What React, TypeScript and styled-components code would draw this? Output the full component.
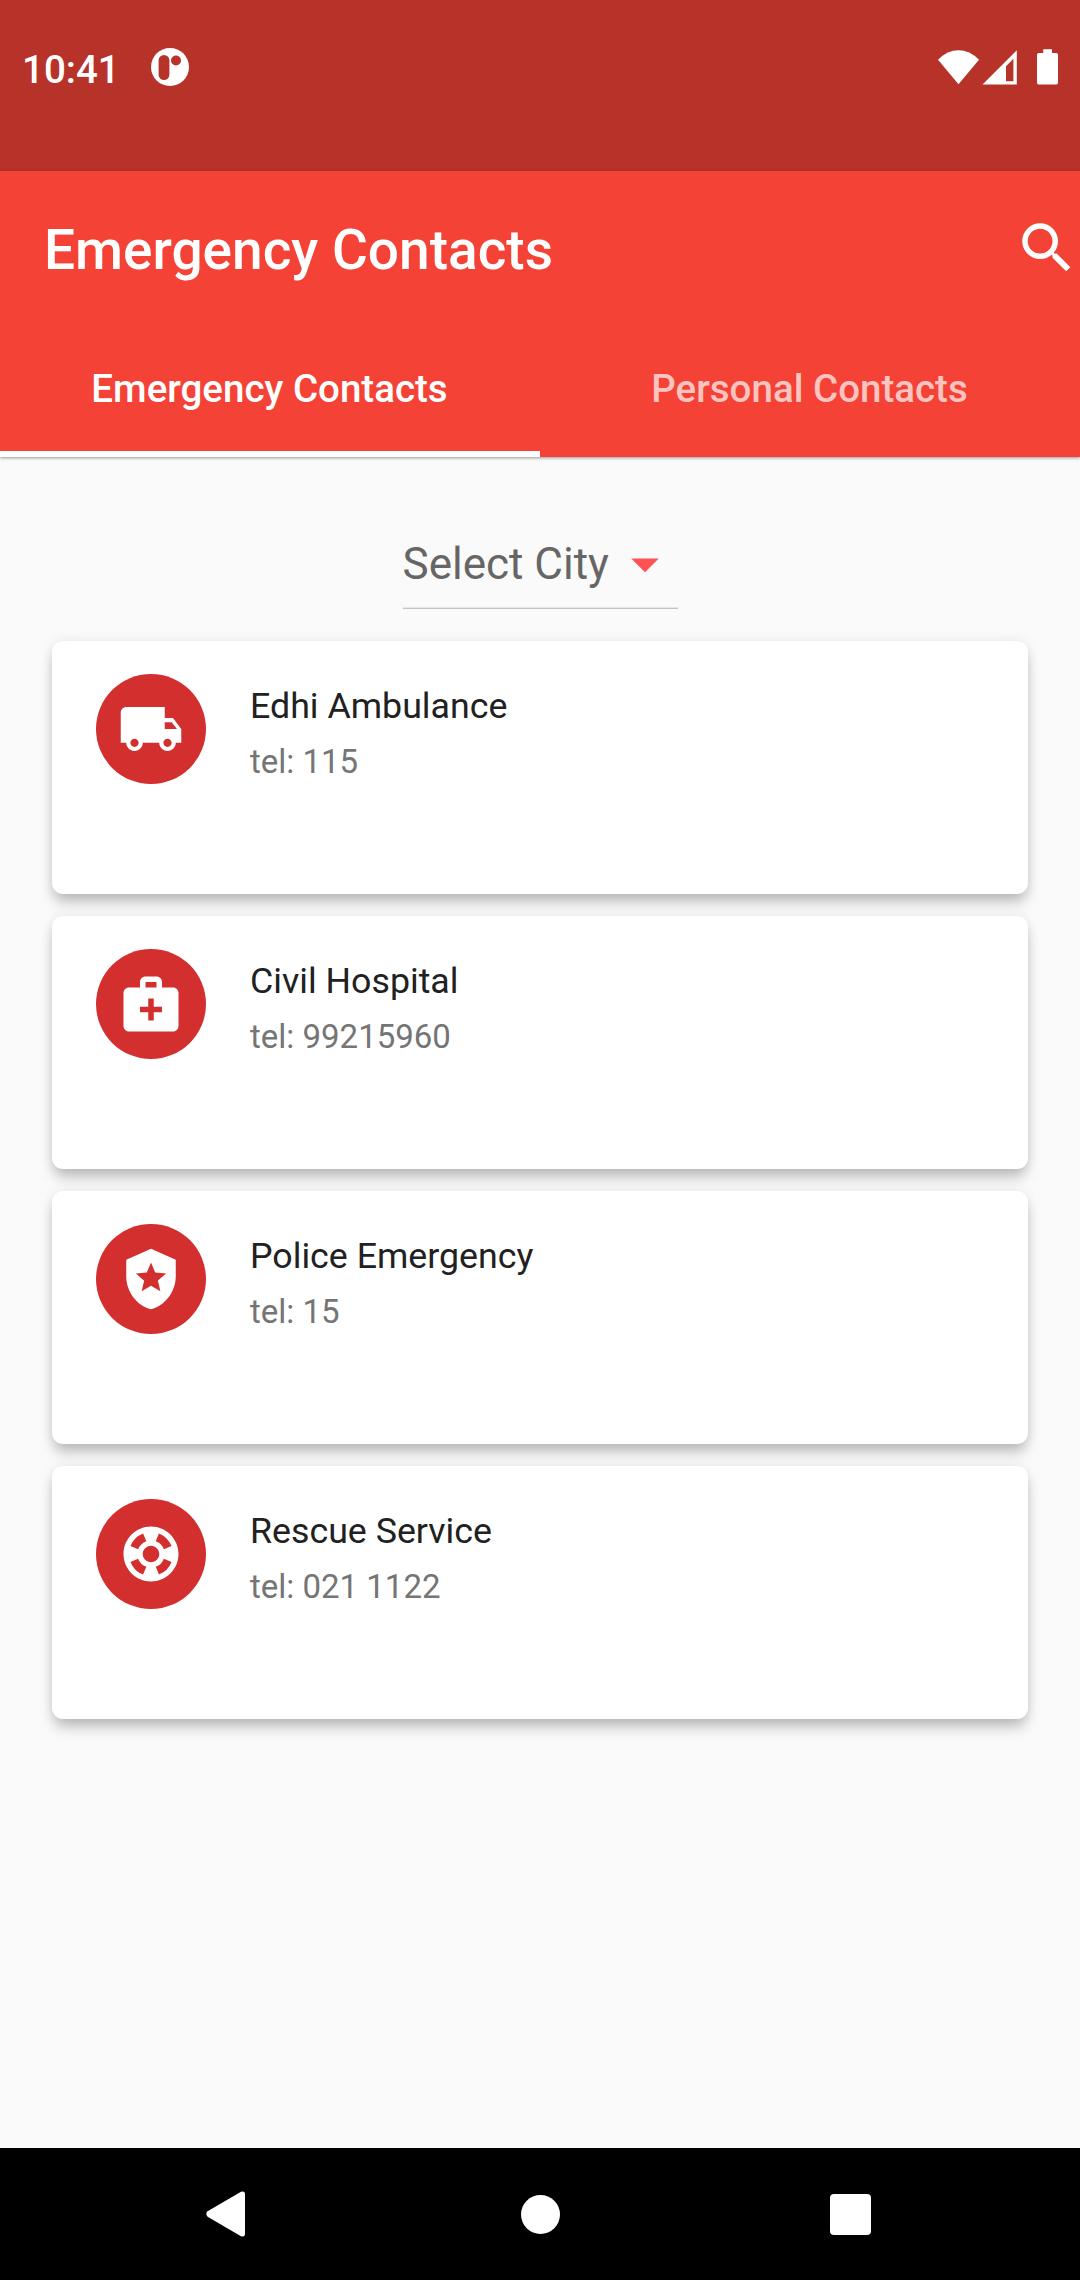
import React from "react";
import styled, { createGlobalStyle } from "styled-components";
import type { IconType } from "react-icons";
import {
  MdArrowDropDown,
  MdLocalPolice,
  MdLocalShipping,
  MdMedicalServices,
  MdSearch,
  MdSupport,
} from "react-icons/md";

const GlobalStyle = createGlobalStyle`
  *, *::before, *::after { box-sizing: border-box; }
  body {
    margin: 0;
    background: #fafafa;
    font-family: Roboto, "Noto Sans", sans-serif;
  }
  button {
    border: 0;
    padding: 0;
    margin: 0;
    background: none;
    font: inherit;
    color: inherit;
  }
  svg { display: block; }
`;

const Screen = styled.div`
  display: flex;
  flex-direction: column;
  width: 1080px;
  height: 2280px;
  overflow: hidden;
  background: #fafafa;
`;

const StatusBar = styled.div`
  display: flex;
  justify-content: space-between;
  align-items: flex-start;
  height: 171px;
  padding: 47px 22px 0;
  background: #b73229;
  color: #fff;
`;

const StatusGroup = styled.div`
  display: flex;
  align-items: flex-start;
`;

const Clock = styled.span`
  width: 128.5px;
  font-size: 38.5px;
  font-weight: 500;
  line-height: 45px;
`;

const Header = styled.header`
  position: relative;
  z-index: 1;
  background: #f44336;
  color: #fff;
  box-shadow: 0 1px 3px rgba(0, 0, 0, 0.4);
`;

const Toolbar = styled.div`
  display: flex;
  align-items: center;
  justify-content: space-between;
  height: 154px;
  padding-left: 44px;
`;

const Title = styled.h1`
  margin: 0;
  padding-top: 4px;
  font-size: 55px;
  font-weight: 500;
  line-height: 64px;
`;

const SearchButton = styled.button`
  width: 66px;
  height: 66px;
  font-size: 66px;
`;

const Tabs = styled.nav`
  display: grid;
  grid-template-columns: 1fr 1fr;
  height: 132px;
`;

const Tab = styled.button<{ $active?: boolean }>`
  padding-right: 1px;
  border-bottom: 6px solid ${(p) => (p.$active ? "#fff" : "transparent")};
  color: ${(p) => (p.$active ? "#fff" : "rgba(255, 255, 255, 0.7)")};
  font-size: 38.5px;
  font-weight: 500;
  line-height: 45px;
`;

const Content = styled.main`
  flex: 1;
  display: flex;
  flex-direction: column;
  align-items: center;
  padding: 74px 52px 0;
`;

const CitySelect = styled.button`
  display: flex;
  align-items: flex-start;
  justify-content: space-between;
  width: 275px;
  height: 78px;
  border-bottom: 1px solid #c2c2c2;
  box-shadow: inset 0 -1px #e6e6e6;
  color: #666;
  font-size: 44px;
  line-height: 52px;
  text-align: left;
  white-space: nowrap;
`;

const CityLabel = styled.span`
  padding-top: 7px;
`;

const DropArrow = styled(MdArrowDropDown)`
  flex: none;
  width: 66px;
  height: 66px;
  color: #ff5252;
`;

const ContactList = styled.ul`
  display: flex;
  flex-direction: column;
  gap: 22px;
  width: 100%;
  margin: 32px 0 0;
  padding: 0;
  list-style: none;
`;

const Card = styled.li`
  display: flex;
  align-items: flex-start;
  gap: 44px;
  height: 253px;
  padding: 33px 44px;
  border-radius: 11px;
  background: #fff;
  box-shadow:
    0 10px 14px -2px rgba(0, 0, 0, 0.24),
    0 0 12px rgba(0, 0, 0, 0.08);
`;

const Avatar = styled.div`
  display: grid;
  place-items: center;
  width: 110px;
  height: 110px;
  border-radius: 50%;
  background: #d32f2f;
  color: #fff;
  font-size: 66px;
`;

const ContactText = styled.div`
  display: flex;
  flex-direction: column;
  gap: 15px;
  padding-top: 11px;
`;

const ContactName = styled.span`
  color: #212121;
  font-size: 35.75px;
  line-height: 42px;
`;

const ContactPhone = styled.span`
  color: #757575;
  font-size: 33px;
  line-height: 39px;
`;

const NavigationBar = styled.footer`
  display: flex;
  align-items: center;
  justify-content: space-between;
  height: 132px;
  padding: 0 209px 0 206px;
  background: #000;
  color: #fff;
`;

const HomeButton = styled.button`
  width: 39px;
  height: 39px;
  margin-left: 5px;
  border-radius: 50%;
  background: #fff;
`;

const RecentsButton = styled.button`
  width: 41px;
  height: 41px;
  border-radius: 4px;
  background: #fff;
`;

const BackIcon = () => (
  <svg width="40" height="46" viewBox="0 0 40 46" fill="currentColor">
    <path d="M35 .8 1.6 20.3Q-1 22.9 1.6 25.7L35 45.2Q39 46.6 39 42.5V3.500Q39-.6 35 .8Z" />
  </svg>
);

const NotificationIcon = () => (
  <svg width="38" height="40" viewBox="0 0 38 40">
    <circle cx="19" cy="20" r="19" fill="#fff" />
    <rect x="7.600" y="8" width="10.800" height="25" rx="5.400" fill="#b73229" />
    <circle cx="25" cy="13.500" r="5" fill="#b73229" />
  </svg>
);

const SystemIcons = () => (
  <svg width="120" height="40" viewBox="938 47 120 40" fill="#fff">
    <path d="M938 59.700Q947.500 50.300 958.500 50.300T979 59.700L958.500 84.300Z" />
    <path
      fillRule="evenodd"
      d="M1016.800 50.300V84.500H982.500ZM1013.400 58.800 1006 66.200V81.300H1013.400Z"
    />
    <path d="M1043.200 49.200H1052V53H1056.300Q1058 53 1058 54.700V82.800Q1058 84.500 1056.300 84.500H1038.700Q1037 84.500 1037 82.800V54.700Q1037 53 1038.700 53H1043.200Z" />
  </svg>
);

interface Contact {
  name: string;
  phone: string;
  icon: IconType;
}

const contacts: Contact[] = [
  { name: "Edhi Ambulance", phone: "115", icon: MdLocalShipping },
  { name: "Civil Hospital", phone: "99215960", icon: MdMedicalServices },
  { name: "Police Emergency", phone: "15", icon: MdLocalPolice },
  { name: "Rescue Service", phone: "021 1122", icon: MdSupport },
];

export default function App() {
  return (
    <Screen>
      <GlobalStyle />
      <StatusBar>
        <StatusGroup>
          <Clock>10:41</Clock>
          <NotificationIcon />
        </StatusGroup>
        <SystemIcons />
      </StatusBar>
      <Header>
        <Toolbar>
          <Title>Emergency Contacts</Title>
          <SearchButton aria-label="Search">
            <MdSearch />
          </SearchButton>
        </Toolbar>
        <Tabs>
          <Tab $active>Emergency Contacts</Tab>
          <Tab>Personal Contacts</Tab>
        </Tabs>
      </Header>
      <Content>
        <CitySelect>
          <CityLabel>Select City</CityLabel>
          <DropArrow />
        </CitySelect>
        <ContactList>
          {contacts.map(({ name, phone, icon: Icon }) => (
            <Card key={name}>
              <Avatar>
                <Icon />
              </Avatar>
              <ContactText>
                <ContactName>{name}</ContactName>
                <ContactPhone>tel: {phone}</ContactPhone>
              </ContactText>
            </Card>
          ))}
        </ContactList>
      </Content>
      <NavigationBar>
        <button aria-label="Back">
          <BackIcon />
        </button>
        <HomeButton aria-label="Home" />
        <RecentsButton aria-label="Recents" />
      </NavigationBar>
    </Screen>
  );
}
